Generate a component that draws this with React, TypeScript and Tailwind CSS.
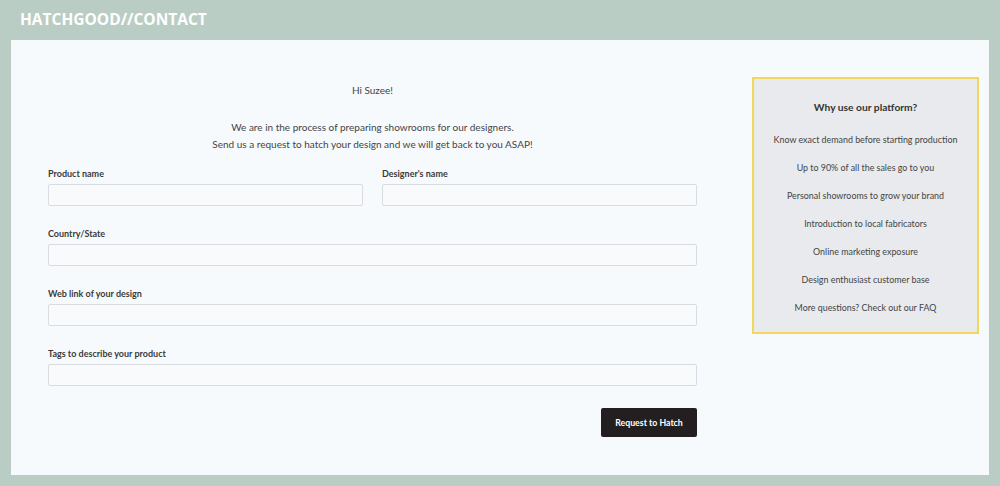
const perks = [
  "Know exact demand before starting production",
  "Up to 90% of all the sales go to you",
  "Personal showrooms to grow your brand",
  "Introduction to local fabricators",
  "Online marketing exposure",
  "Design enthusiast customer base",
  "More questions? Check out our FAQ",
];

function Field({ label }: { label: string }) {
  return (
    <div className="flex flex-col">
      <label className="text-[9px] leading-[14px] font-bold text-[#3a3a3a]">{label}</label>
      <input
        type="text"
        className="mt-[3px] h-[22px] w-full rounded-[2px] border border-[#d9dde1] bg-[#f8fafc] outline-none"
      />
    </div>
  );
}

export default function App() {
  return (
    <div className="h-[486px] w-full bg-[#b9cdc4] font-['Lato',sans-serif]">
      <div className="flex h-[40px] items-center px-[20px]">
        <h1 className="font-['Open_Sans',sans-serif] text-[15.5px] font-bold text-white">
          HATCHGOOD//CONTACT
        </h1>
      </div>

      <div className="mx-[11px] flex h-[435px] items-start bg-[#f7fafc] pl-[37px] pr-[10px]">
        <form className="flex w-[649px] flex-col pt-[42px]">
          <p className="text-center text-[10px] leading-[17px] text-[#444]">Hi Suzee!</p>
          <p className="mt-[20px] text-center text-[10px] leading-[17px] text-[#444]">
            We are in the process of preparing showrooms for our designers.
            <br />
            Send us a request to hatch your design and we will get back to you ASAP!
          </p>

          <div className="mt-[14px] grid grid-cols-2 gap-x-[19px]">
            <Field label="Product name" />
            <Field label="Designer's name" />
          </div>
          <div className="mt-[21px]">
            <Field label="Country/State" />
          </div>
          <div className="mt-[21px]">
            <Field label="Web link of your design" />
          </div>
          <div className="mt-[21px]">
            <Field label="Tags to describe your product" />
          </div>

          <div className="mt-[22px] flex justify-end">
            <button
              type="button"
              className="h-[29px] w-[96px] rounded-[2px] bg-[#231f20] text-[8.75px] font-bold text-white"
            >
              Request to Hatch
            </button>
          </div>
        </form>

        <aside className="ml-[55px] mt-[37px] w-[227px] border-2 border-[#f3d75c] bg-[#e8eaed] pb-[17px] pt-[20px] text-center">
          <h2 className="text-[10.25px] leading-[16px] font-bold text-[#333]">Why use our platform?</h2>
          <ul className="mt-[18px] flex flex-col gap-[14px]">
            {perks.map((p) => (
              <li key={p} className="text-[8.9px] leading-[14px] text-[#444]">
                {p}
              </li>
            ))}
          </ul>
        </aside>
      </div>
    </div>
  );
}
